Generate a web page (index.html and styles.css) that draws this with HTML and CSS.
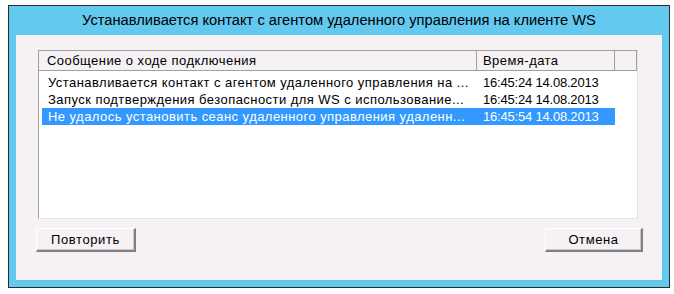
FILE: index.html
```html
<!DOCTYPE html>
<html lang="ru">
<head>
  <meta charset="UTF-8" />
  <title>Подключение</title>
  <link rel="stylesheet" href="styles.css">
</head>
<body>
  <div class="window">
    <div class="title-bar">Устанавливается контакт с агентом удаленного управления на клиенте WS</div>
    <div class="client">
      <div class="list">
        <div class="list-header">
          <div class="col-msg">Сообщение о ходе подключения</div>
          <div class="col-time">Время-дата</div>
          <div class="col-fill"></div>
        </div>
        <div class="list-body">
          <div class="row">
            <div class="col-msg">Устанавливается контакт с агентом удаленного управления на ...</div>
            <div class="col-time">16:45:24 14.08.2013</div>
          </div>
          <div class="row">
            <div class="col-msg">Запуск подтверждения безопасности для WS с использование...</div>
            <div class="col-time">16:45:24 14.08.2013</div>
          </div>
          <div class="row selected">
            <div class="col-msg">Не удалось установить сеанс удаленного управления удаленн...</div>
            <div class="col-time">16:45:54 14.08.2013</div>
          </div>
        </div>
      </div>
      <div class="buttons">
        <button class="btn btn-retry">Повторить</button>
        <button class="btn btn-cancel">Отмена</button>
      </div>
    </div>
  </div>
</body>
</html>
```

FILE: styles.css
```css
body {
  margin: 0;
  background: #ffffff;
  font-family: "Liberation Sans", Arial, sans-serif;
  color: #000;
}

.window {
  margin: 5px 0 0 8px;
  width: 646px;
  height: 274px;
  border: 1px solid #2b2b2b;
  background: #63c9ef;
  padding: 0 7px 7px 7px;
  display: flex;
  flex-direction: column;
}

.title-bar {
  height: 29px;
  line-height: 29px;
  text-align: center;
  font-size: 14.7px;
  color: #000;
}

.client {
  flex: 1;
  background: #f5f1f5;
  padding: 15px 24px 0 22px;
  display: flex;
  flex-direction: column;
}

.list {
  height: 169px;
  background: #fff;
  border-top: 1px solid #a0a0a0;
  border-left: 1px solid #a0a0a0;
  border-right: 1px solid #e3e3e3;
  border-bottom: 1px solid #e3e3e3;
  box-sizing: border-box;
  font-size: 13px;
}

.list-header {
  display: flex;
  height: 20px;
  background: #f5f1f5;
  border-bottom: 1px solid #a0a0a0;
  box-sizing: border-box;
}

.list-header > div {
  line-height: 19px;
  border-right: 1px solid #a0a0a0;
  box-sizing: border-box;
}

.col-msg {
  width: 438px;
  padding-left: 8px;
  box-sizing: border-box;
  white-space: nowrap;
  overflow: hidden;
  letter-spacing: 0.45px;
}

.col-time {
  width: 138px;
  padding-left: 6px;
  box-sizing: border-box;
  white-space: nowrap;
  letter-spacing: -0.2px;
}

.list-header .col-time {
  letter-spacing: 0.45px;
}

.col-fill {
  flex: 1;
}

.list-body {
  padding-top: 3px;
}

.row {
  display: flex;
  height: 17px;
  line-height: 17px;
  width: 576px;
}

.row .col-msg {
  padding-left: 6px;
  margin-left: 3px;
  width: 435px;
}

.row.selected {
  background: #3399ff;
  color: #fff;
  margin-left: 3px;
  width: 573px;
}

.row.selected .col-msg {
  margin-left: 0;
}

.buttons {
  display: flex;
  justify-content: space-between;
  margin: 9px -5px 0 -2px;
}

.btn {
  height: 24px;
  font-family: "Liberation Sans", Arial, sans-serif;
  font-size: 13px;
  letter-spacing: 0.6px;
  background: #f5f1f5;
  border-top: 1px solid #ffffff;
  border-left: 1px solid #ffffff;
  border-right: 2px solid #808080;
  border-bottom: 2px solid #808080;
  box-shadow: inset -1px -1px 0 #c8c8c8;
  padding: 0;
  color: #000;
}

.btn-retry {
  width: 100px;
}

.btn-cancel {
  width: 98px;
}
```
